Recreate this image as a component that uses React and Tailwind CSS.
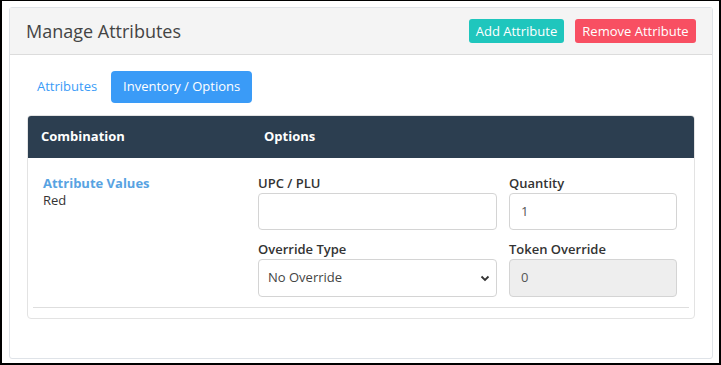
import React from 'react';

const font = { fontFamily: '"Open Sans", "Noto Sans", sans-serif' };

export default function App() {
  return (
    <div
      className="w-[721px] h-[365px] bg-white border-t border-x-2 border-b-2 border-black pt-[6px] pl-[7px] pr-[6px]"
      style={font}
    >
      <div className="h-[352px] border border-[#dfe3e8] rounded-[3px] bg-white">
        {/* Card header */}
        <div className="h-[47px] bg-[#f4f4f4] border-b border-[#dcdcdc] flex items-center justify-between pl-[16px] pr-[16px]">
          <h2 className="text-[18px] text-[#444] leading-none">Manage Attributes</h2>
          <div className="flex gap-[11px]">
            <button className="h-[24px] w-[95px] rounded-[3px] bg-[#1fc6bd] text-white text-[13px] leading-none">
              Add Attribute
            </button>
            <button className="h-[24px] w-[121px] rounded-[3px] bg-[#f84f62] text-white text-[13px] leading-none">
              Remove Attribute
            </button>
          </div>
        </div>

        {/* Tabs */}
        <div className="flex items-center gap-[3px] pl-[16px] mt-[16px]">
          <span className="px-[11px] text-[13px] text-[#3a9bf7]">Attributes</span>
          <span className="h-[32px] w-[141px] flex items-center justify-center rounded-[4px] bg-[#3a9bf7] text-white text-[13px]">
            Inventory / Options
          </span>
        </div>

        {/* Table */}
        <div className="mx-[17px] mt-[12px] h-[204px] border border-[#e3e3e3] rounded-[4px] overflow-hidden">
          <div className="h-[42px] bg-[#2c3e50] flex items-center text-white text-[13px] font-bold">
            <div className="w-[222px] pl-[13px]">Combination</div>
            <div className="pl-[14px]">Options</div>
          </div>
          <div className="flex px-[5px] pt-[17px]">
            <div className="w-[225px] pl-[10px] text-[13px] leading-[17px]">
              <div className="font-bold text-[#58a3e2]">Attribute Values</div>
              <div className="text-[#333]">Red</div>
            </div>
            <div className="grid grid-cols-[239px_168px] gap-x-[12px] gap-y-[11px] text-[13px]">
              <Field label="UPC / PLU">
                <input className="w-full h-[37px] border border-[#d4d4d4] rounded-[4px] px-[11px] bg-white" />
              </Field>
              <Field label="Quantity">
                <div className="w-full h-[37px] border border-[#d4d4d4] rounded-[4px] px-[11px] flex items-center text-[#555]">
                  1
                </div>
              </Field>
              <Field label="Override Type">
                <div className="w-full h-[38px] border border-[#d4d4d4] rounded-[4px] pl-[9px] pr-[6px] flex items-center justify-between text-[#444]">
                  <span>No Override</span>
                  <svg width="10" height="10" viewBox="0 0 10 10">
                    <path d="M1.5 3.5 L5 7 L8.5 3.5" fill="none" stroke="#333" strokeWidth="1.8" />
                  </svg>
                </div>
              </Field>
              <Field label="Token Override">
                <div className="w-full h-[38px] border border-[#d4d4d4] rounded-[4px] px-[11px] flex items-center bg-[#eeeeee] text-[#555]">
                  0
                </div>
              </Field>
            </div>
          </div>
          <div className="mx-[5px] mt-[10px] border-t border-[#dedede]" />
        </div>
      </div>
    </div>
  );
}

function Field({ label, children }) {
  return (
    <div>
      <div className="font-semibold text-[#333] leading-[17px] mb-[1px]">{label}</div>
      {children}
    </div>
  );
}
